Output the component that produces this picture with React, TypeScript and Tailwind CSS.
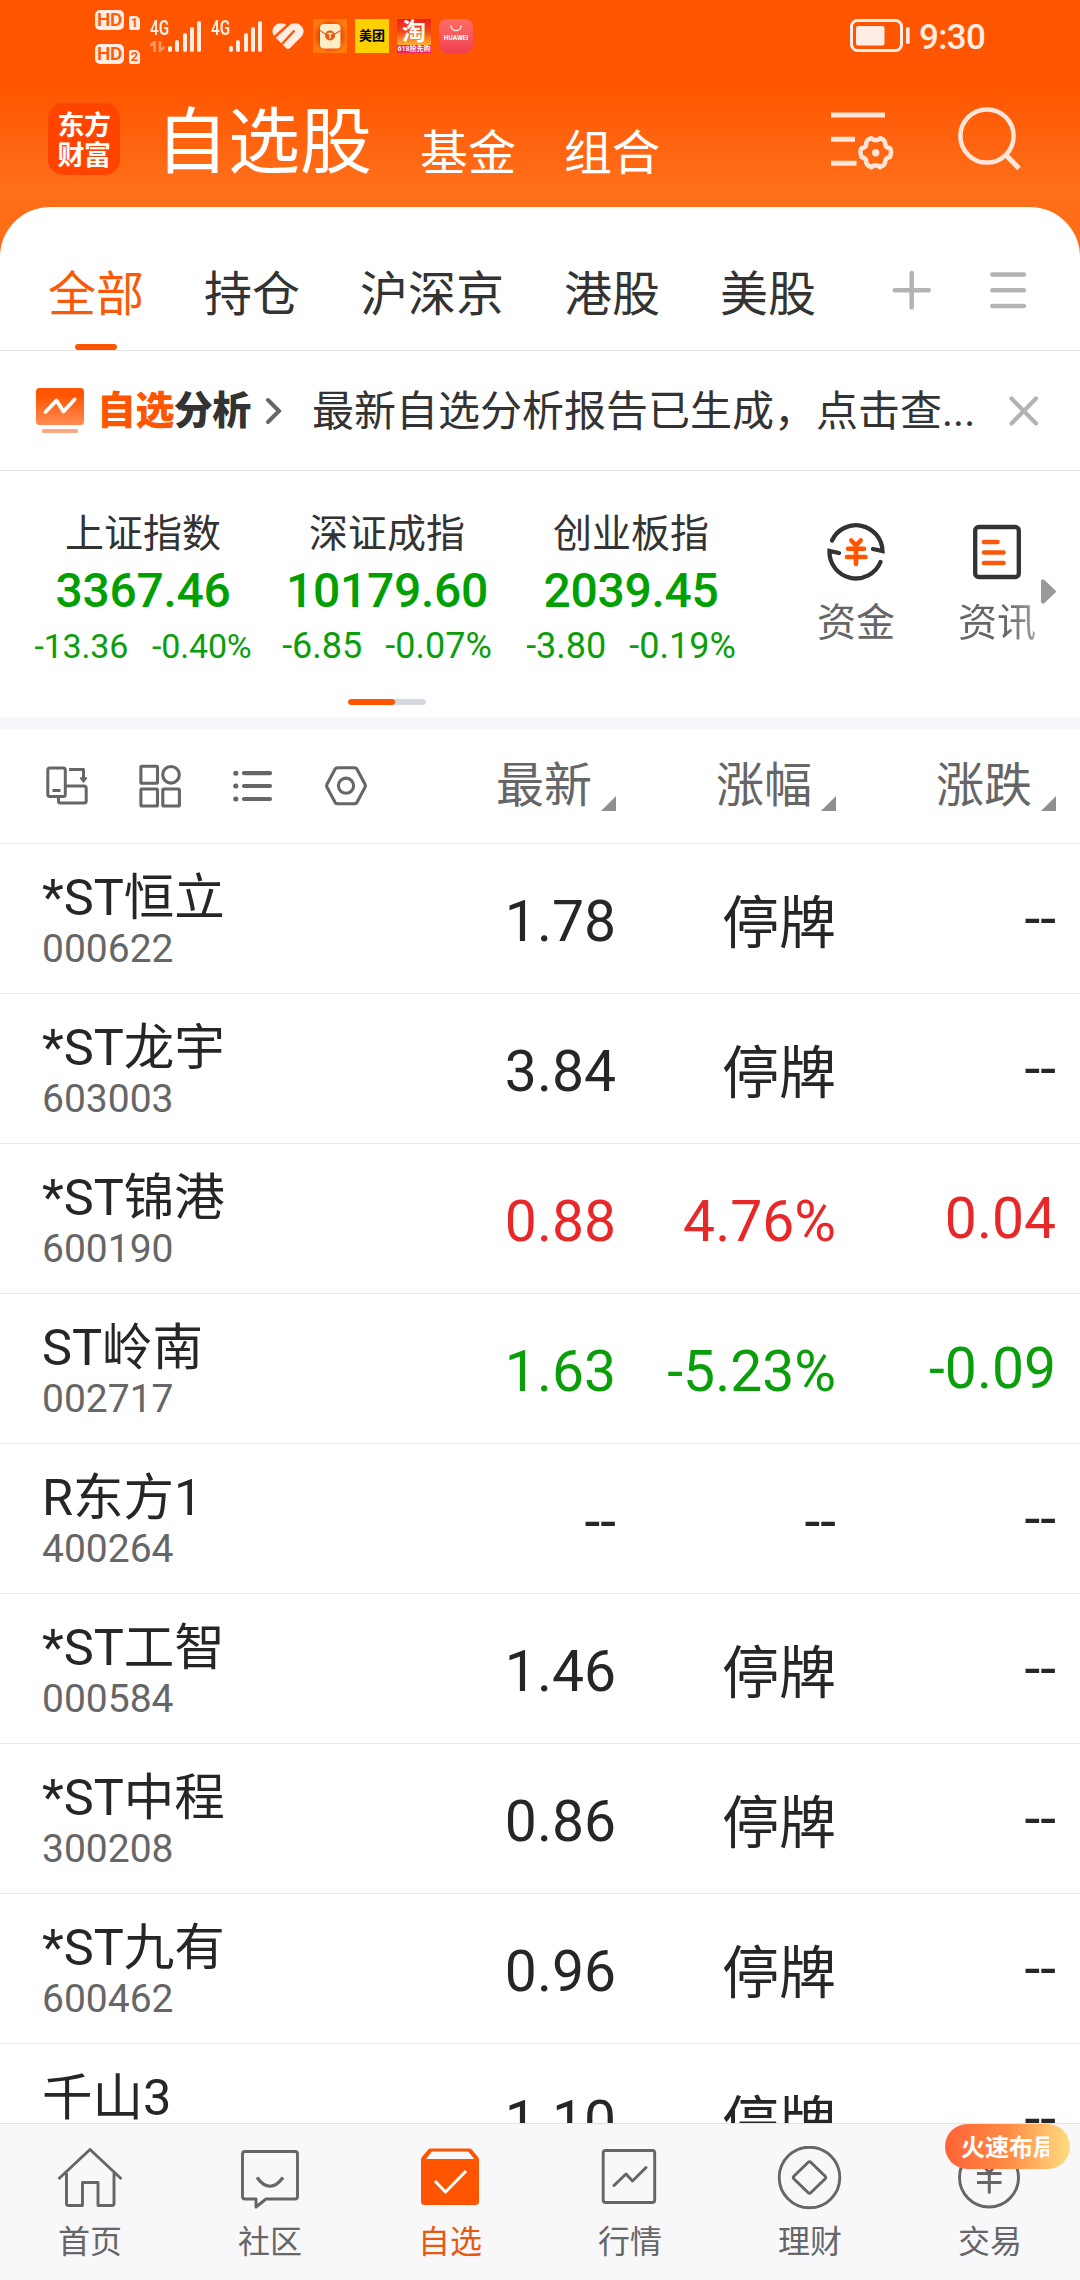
import React from "react";

type Tone = "flat" | "up" | "down";

interface Stock {
  name: string;
  code: string;
  price: string;
  pct: string;
  change: string;
  tone: Tone;
}

const stocks: Stock[] = [
  { name: "*ST恒立", code: "000622", price: "1.78", pct: "停牌", change: "--", tone: "flat" },
  { name: "*ST龙宇", code: "603003", price: "3.84", pct: "停牌", change: "--", tone: "flat" },
  { name: "*ST锦港", code: "600190", price: "0.88", pct: "4.76%", change: "0.04", tone: "up" },
  { name: "ST岭南", code: "002717", price: "1.63", pct: "-5.23%", change: "-0.09", tone: "down" },
  { name: "R东方1", code: "400264", price: "--", pct: "--", change: "--", tone: "flat" },
  { name: "*ST工智", code: "000584", price: "1.46", pct: "停牌", change: "--", tone: "flat" },
  { name: "*ST中程", code: "300208", price: "0.86", pct: "停牌", change: "--", tone: "flat" },
  { name: "*ST九有", code: "600462", price: "0.96", pct: "停牌", change: "--", tone: "flat" },
  { name: "千山3", code: "", price: "1.10", pct: "停牌", change: "--", tone: "flat" },
];

const toneClass: Record<Tone, string> = {
  flat: "text-[#262626]",
  up: "text-[#e82828]",
  down: "text-[#0a9e0a]",
};

const indices = [
  { name: "上证指数", value: "3367.46", diff: "-13.36", pct: "-0.40%", size: "gap-[24px] text-[34px] tracking-[-0.2px]" },
  { name: "深证成指", value: "10179.60", diff: "-6.85", pct: "-0.07%", size: "gap-[23px] text-[36px]" },
  { name: "创业板指", value: "2039.45", diff: "-3.80", pct: "-0.19%", size: "gap-[23px] text-[36px]" },
];

function HdBadge({ sim }: { sim: string }) {
  return (
    <div className="flex h-[20px] items-end gap-[5px]">
      <div className="flex h-[20px] w-[29px] items-center justify-center rounded-[5px] bg-[#ffede4] text-[19px] leading-[20px] font-semibold tracking-[-0.5px] text-[#ff5a08]">
        HD
      </div>
      <div className="flex h-[14px] w-[11px] items-center justify-center rounded-[2px] rounded-tr-[5px] bg-[#ffede4] text-[13px] leading-[14px] font-bold text-[#ff5a08]">
        {sim}
      </div>
    </div>
  );
}

function Signal({ data }: { data?: boolean }) {
  return (
    <div className="flex h-[31px] w-[51px] items-end">
      <div className="flex h-[31px] w-[18px] flex-col justify-between">
        <span className="origin-left scale-x-[0.76] text-[20px] leading-[15px] font-semibold text-[#ffede4]">4G</span>
        {data ? (
          <svg width="16" height="11" viewBox="0 0 16 11" fill="none" stroke="#ff9a68" strokeWidth="2.500">
            <path d="M0.500 4.500 4.500 1V11M10 0v9.500L14.500 6" />
          </svg>
        ) : null}
      </div>
      <div className="flex flex-1 items-end justify-between">
        <i className="h-[6px] w-[4px] rounded-full bg-[#ffede4]" />
        <i className="h-[12px] w-[4px] rounded-full bg-[#ffede4]" />
        <i className="h-[19px] w-[4px] rounded-full bg-[#ffede4]" />
        <i className="h-[25px] w-[4px] rounded-full bg-[#ffede4]" />
        <i className="h-[31px] w-[4px] rounded-full bg-[#ffede4]" />
      </div>
    </div>
  );
}

function StatusBar() {
  return (
    <div className="flex h-[72px] items-center pr-[96px] pl-[95px]">
      <div className="mt-[2px] flex w-[45px] flex-col gap-[14px]">
        <HdBadge sim="1" />
        <HdBadge sim="2" />
      </div>
      <div className="ml-[10px] flex gap-[10px]">
        <Signal data />
        <Signal />
      </div>
      <svg className="ml-[10px]" width="32" height="28" viewBox="0 0 32 28">
        <path
          fill="#ffede4"
          d="M16 4.500C12 -0.500 4.500 0.500 1.500 5.500C-0.500 9 0.500 12.500 3 15L14 26Q16 28 18 26L29 15C31.500 12.500 32.500 9 30.500 5.500C27.500 0.500 20 -0.500 16 4.500Z"
        />
        <path fill="none" stroke="#ff5500" strokeWidth="2.400" d="M2 15.500 16.500 2.500M9.500 22.500 22.500 8.500" />
      </svg>
      <svg className="ml-[9px]" width="34" height="34" viewBox="0 0 34 34">
        <defs>
          <radialGradient id="envelopeGlow">
            <stop offset="0.600" stopColor="#e83f00" />
            <stop offset="1" stopColor="#ff7a0c" />
          </radialGradient>
        </defs>
        <rect width="34" height="34" fill="url(#envelopeGlow)" />
        <rect x="7" y="5" width="20.500" height="24.500" rx="4" fill="#ffedc8" />
        <path d="M7 11.500 17 18l10.500-6.500" fill="none" stroke="#e36a28" strokeWidth="1.200" />
        <circle cx="17" cy="16.500" r="5" fill="#e8590f" />
        <path d="M14.500 14.500h5M17 14.500v5" stroke="#ffedc8" strokeWidth="1.500" />
      </svg>
      <div className="ml-[8px] flex h-[34px] w-[34px] items-center justify-center bg-[#ffd100] text-[13px] font-bold text-black">
        美团
      </div>
      <div className="ml-[8px] flex h-[34px] w-[34px] flex-col overflow-hidden text-white">
        <div className="flex h-[26px] items-center justify-center bg-linear-to-b from-[#ee1b1b] via-[#f2481c] to-[#ffb02e] text-[24px] leading-[26px] font-bold">
          淘
        </div>
        <div className="flex h-[8px] items-center justify-center bg-[#f2205c] text-[7px] leading-[8px] font-bold whitespace-nowrap">
          618抢先购
        </div>
      </div>
      <div className="ml-[8px] flex h-[34px] w-[34px] flex-col items-center rounded-[8px] bg-linear-to-b from-[#ff6d66] to-[#f03e50] pt-[6px] text-white">
        <svg width="12" height="7" viewBox="0 0 12 7" fill="none" stroke="#fff" strokeWidth="1.200">
          <path d="M0.700 0.500C2 7.300 10 7.300 11.300 0.500" />
        </svg>
        <span className="mt-[2px] text-[6.5px] leading-[9px] font-bold">HUAWEI</span>
      </div>
      <svg className="ml-auto" width="60" height="34" viewBox="0 0 60 34">
        <rect x="1.500" y="1.500" width="50" height="30" rx="6" fill="none" stroke="#ffede4" strokeWidth="3" />
        <rect x="6" y="7" width="28.500" height="19.500" rx="2" fill="#ffede4" />
        <rect x="56" y="8" width="3.700" height="17" rx="1.800" fill="#ffede4" />
      </svg>
      <span className="mt-[3px] ml-[9px] w-[65px] text-[35px] leading-[36px] font-medium tracking-[-0.7px] text-[#ffede4]">9:30</span>
    </div>
  );
}

function TitleBar() {
  return (
    <div className="flex h-[135px] items-start pl-[48px] text-white">
      <div className="mt-[31px] flex h-[72px] w-[72px] flex-col items-center rounded-[15px] bg-[#ff4400] pt-[6px] font-['Noto_Sans_CJK_SC'] text-[27px] leading-[30px] font-bold tracking-[-0.5px]">
        <span>东方</span>
        <span>财富</span>
      </div>
      <h1 className="mt-[35px] ml-[36px] w-[216px] text-[72px] leading-[72px]">自选股</h1>
      <span className="mt-[58px] ml-[48px] text-[48px] leading-[48px]">基金</span>
      <span className="mt-[58px] ml-[48px] text-[48px] leading-[48px]">组合</span>
      <svg className="mt-[38px] ml-[171px]" width="64" height="60" viewBox="0 0 64 60" fill="none" stroke="#ffe6d8" strokeWidth="5">
        <path d="M0 5h54M0 29.200h24M0 53.200h25.500" />
        <path
          strokeWidth="4.500"
          strokeLinejoin="round"
          d="M40.300 28.200Q44.700 32 49.100 28.200Q54.500 29.800 54.200 34.500Q54.500 37.300 59 38.300Q61 41 59 47Q54.500 48 54.200 51Q54.500 55 49.100 57.200Q44.700 53.500 40.300 57.200Q35 55 35.200 51Q35 48 30.500 47Q28.500 41 30.500 38.300Q35 37.300 35.200 34.500Q35 29.800 40.300 28.200Z"
        />
        <circle cx="44.700" cy="42.700" r="3.700" fill="#ffe6d8" stroke="none" />
      </svg>
      <svg className="mt-[34px] ml-[63px]" width="64" height="64" viewBox="0 0 64 64" fill="none" stroke="#ffe6d8" strokeWidth="4.500">
        <circle cx="29" cy="30" r="26.600" />
        <path strokeWidth="5" d="M47 48 61 62.500" />
      </svg>
    </div>
  );
}

function GroupTabs() {
  const tabs = ["全部", "持仓", "沪深京", "港股", "美股"];
  return (
    <div className="flex h-[144px] items-start rounded-t-[50px] border-b border-[#e3e3e3] bg-white pl-[48px]">
      <div className="flex gap-[60px]">
        {tabs.map((t, i) => (
          <div
            key={t}
            className={
              i === 0
                ? "flex h-[143px] flex-col items-center justify-between pt-[64px] text-[48px] leading-[48px] text-[#f95a0a]"
                : "flex h-[143px] flex-col items-center pt-[64px] text-[48px] leading-[48px] text-[#333]"
            }
          >
            <span>{t}</span>
            {i === 0 ? <i className="h-[6px] w-[42px] rounded-full bg-[#ff5500]" /> : null}
          </div>
        ))}
      </div>
      <svg className="mt-[63px] ml-[76px]" width="40" height="40" viewBox="0 0 40 40" stroke="#b3b3b3" strokeWidth="4.500" strokeLinecap="round">
        <path d="M2.700 20.300h34M19.700 3v34.600" />
      </svg>
      <svg className="mt-[63px] ml-[58px]" width="36" height="40" viewBox="0 0 36 40" stroke="#b3b3b3" strokeWidth="4.500" strokeLinecap="round">
        <path d="M2.300 4.600h31.500M2.300 20.300h31.500M2.300 36h31.500" />
      </svg>
    </div>
  );
}

function AnalysisNotice() {
  return (
    <div className="flex h-[120px] items-center border-b border-[#e3e3e3] pl-[36px]">
      <svg width="48" height="46" viewBox="0 0 48 46">
        <defs>
          <linearGradient id="analysisFill" x1="0" y1="0" x2="0" y2="1">
            <stop offset="0.200" stopColor="#ff5500" />
            <stop offset="1" stopColor="#ff8d55" />
          </linearGradient>
        </defs>
        <rect width="48" height="37" rx="3.500" fill="url(#analysisFill)" />
        <path d="M9.500 24 20.500 12.500l7 11 11-12" fill="none" stroke="#fff" strokeWidth="3.800" strokeLinecap="round" strokeLinejoin="round" />
        <rect x="6" y="41" width="36" height="4" rx="1.500" fill="#fba882" />
      </svg>
      <span className="ml-[13px] w-[153px] text-[39px] leading-[40px] font-black tracking-[-0.6px] whitespace-nowrap text-[#333]">
        <span className="text-[#ff5500]">自选</span>分析
      </span>
      <svg className="ml-[15px]" width="18" height="28" viewBox="0 0 18 28" fill="none" stroke="#666" strokeWidth="4" strokeLinecap="round">
        <path d="M3 3 14 14 3 25" />
      </svg>
      <p className="mt-[2px] ml-[29px] w-[666px] text-[42px] leading-[42px] whitespace-nowrap text-[#333]">最新自选分析报告已生成，点击查...</p>
      <svg className="ml-[30px]" width="32" height="32" viewBox="0 0 32 32" fill="none" stroke="#b3b3b3" strokeWidth="4.200" strokeLinecap="round">
        <path d="M3.500 3.500 28 28.500M28 3.500 3.500 28.500" />
      </svg>
    </div>
  );
}

function IndexStrip() {
  return (
    <div className="relative flex h-[246px] pl-[21px]">
      {indices.map((x) => (
        <div key={x.name} className="flex w-[244px] flex-col items-center">
          <span className="mt-[44px] text-[39px] leading-[39px] text-[#333]">{x.name}</span>
          <span className="mt-[13px] text-[48px] leading-[48px] font-medium tracking-[-0.3px] text-[#00a000]">{x.value}</span>
          <div className={"mt-[13px] flex h-[36px] items-end leading-[36px] whitespace-nowrap text-[#0a9e0a] " + x.size}>
            <span>{x.diff}</span>
            <span>{x.pct}</span>
          </div>
        </div>
      ))}
      <div className="ml-[46px] flex w-[114px] flex-col items-center">
        <svg className="mt-[50px]" width="60" height="60" viewBox="0 0 60 60" fill="none" stroke="#333" strokeWidth="4.300" strokeLinecap="round" strokeLinejoin="miter">
          <path d="M6 19.500A26.500 26.500 0 0 1 56.500 30L47 28" />
          <path d="M54.500 41A26.500 26.500 0 0 1 3.500 30L13 32" />
          <path stroke="#ff5500" strokeWidth="4.600" d="M25.300 19.500 30 24.500 34.700 19.500M22 27.700h16M21 36h18.500M30 25v18" />
        </svg>
        <span className="mt-[23px] text-[39px] leading-[38px] text-[#666]">资金</span>
      </div>
      <div className="ml-[28px] flex w-[112px] flex-col items-center">
        <svg className="mt-[51px]" width="48" height="60" viewBox="0 0 48 60" fill="none" stroke="#333" strokeWidth="4.300" strokeLinecap="round">
          <rect x="2.200" y="5" width="43.600" height="50" rx="3.500" />
          <path stroke="#f95a0a" strokeWidth="4.600" d="M11 20h13.500M11 30.500h19.500M11 41h19.500" />
        </svg>
        <span className="mt-[22px] bg-linear-to-r from-[#666] from-60% to-[#a0a0a0] bg-clip-text text-[39px] leading-[38px] text-transparent">资讯</span>
      </div>
      <svg className="absolute top-[108px] left-[1041px]" width="16" height="25" viewBox="0 0 16 25" fill="#999">
        <path d="M0 3C0 0 2 -0.500 4 1.500L14.500 11.500Q15.500 12.500 14.500 13.500L4 23.500C2 25.500 0 25 0 22Z" />
      </svg>
      <div className="absolute top-[228px] left-[348px] h-[6px] w-[78px] overflow-hidden rounded-full bg-[#d5d8de]">
        <i className="block h-[6px] w-[47px] rounded-full bg-[#ff5500]" />
      </div>
    </div>
  );
}

function TableHead() {
  return (
    <div className="flex h-[115px] items-center border-b border-[#ebebeb] pl-[45px]">
      <svg width="44" height="44" viewBox="0 0 44 44" fill="none" stroke="#666" strokeWidth="3" strokeLinejoin="round">
        <rect x="2.800" y="4" width="17.500" height="28.500" rx="2" />
        <path d="M7.500 26.500h8M13.500 33.500V37.500Q13.500 39 15 39H39Q41.200 39 41.200 37V24.500Q41.200 22 39 22H21M24 5.500H38.500V15" />
        <path d="M35.500 14h6l-3 4z" fill="#666" strokeWidth="1.500" />
      </svg>
      <svg className="ml-[50px]" width="44" height="44" viewBox="0 0 44 44" fill="none" stroke="#666" strokeWidth="3.100">
        <rect x="1.900" y="2.300" width="16.600" height="17" rx="1" />
        <circle cx="32" cy="10.800" r="8.300" />
        <rect x="1.900" y="25" width="16.600" height="17" rx="1" />
        <rect x="23.800" y="25" width="16.600" height="17" rx="1" />
      </svg>
      <svg className="ml-[50px]" width="42" height="44" viewBox="0 0 42 44" stroke="#666" strokeWidth="4.200" strokeLinecap="round">
        <path d="M11 9.200h26M11 22h26M11 35h26" />
        <path strokeWidth="5" d="M2.700 9.200h0.200M2.700 22h0.200M2.700 35h0.200" />
      </svg>
      <svg className="ml-[49px]" width="44" height="44" viewBox="0 0 44 44" fill="none" stroke="#666" strokeWidth="3.100" strokeLinejoin="round">
        <path d="M13.500 3.700H30.500Q32 3.700 33 5.200L41 20.300Q41.800 21.800 41 23.300L33 38.300Q32 39.800 30.500 39.800H13.500Q12 39.800 11 38.300L3 23.300Q2.200 21.800 3 20.300L11 5.200Q12 3.700 13.500 3.700Z" />
        <circle cx="22" cy="21.700" r="7.600" />
      </svg>
      <div className="ml-auto flex pr-[24px]">
        {["最新", "涨幅", "涨跌"].map((h) => (
          <div key={h} className="flex w-[220px] items-end justify-end gap-[9px] text-[48px] leading-[50px] text-[#666]">
            <span>{h}</span>
            <svg className="mb-[0px]" width="15" height="15" viewBox="0 0 15 15" fill="#8e8e93">
              <path d="M15 0V15H0Z" />
            </svg>
          </div>
        ))}
      </div>
    </div>
  );
}

function StockRow({ s }: { s: Stock }) {
  return (
    <div className="flex h-[150px] shrink-0 items-start border-b border-[#ebebeb] pl-[42px]">
      <div className="flex w-[354px] flex-col">
        <span className="mt-[28px] text-[50.5px] leading-[51px] text-[#262626]">{s.name}</span>
        <span className="mt-[7px] text-[39px] leading-[39px] text-[#666]">{s.code}</span>
      </div>
      <div className={"flex text-right text-[57px] leading-[57px] " + toneClass[s.tone]}>
        <span className="mt-[49px] w-[220px]">{s.price}</span>
        <span className={s.pct === "停牌" ? "mt-[51px] w-[220px]" : "mt-[49px] w-[220px]"}>{s.pct}</span>
        <span className="mt-[46px] w-[220px]">{s.change}</span>
      </div>
    </div>
  );
}

const navItems: { label: string; active?: boolean; icon: React.ReactNode }[] = [
  {
    label: "首页",
    icon: <path d="M1.500 33 33 3.500 64.500 33M9.500 27V57.500Q9.500 59.500 11.500 59.500H25.500V36.500H41V59.500H55Q57 59.500 57 57.500V27" />,
  },
  {
    label: "社区",
    icon: (
      <>
        <path d="M8 5.500H58Q60.500 5.500 60.500 8V50.500Q60.500 53 58 53H29L19 61V53H8Q5.500 53 5.500 50.500V8Q5.500 5.500 8 5.500Z" />
        <path strokeWidth="3.200" d="M20 31.500Q33 49 46 31.500" />
      </>
    ),
  },
  {
    label: "自选",
    active: true,
    icon: (
      <>
        <path d="M13 2.500H53Q54 2.500 54.500 3.200L61 11Q62 12 62 14V55.500Q62 59 58.500 59H7.500Q4 59 4 55.500V14Q4 12 5 11L11.500 3.200Q12 2.500 13 2.500Z" fill="#ff5500" stroke="none" />
        <path d="M15 5.500H51L57.500 13H9Z" fill="#f8f8fb" stroke="none" />
        <path d="M18 35 28.500 46 49 25" stroke="#fff" strokeWidth="3" />
      </>
    ),
  },
  {
    label: "行情",
    icon: (
      <>
        <rect x="6.200" y="4.500" width="51.500" height="52" rx="2.500" />
        <path strokeWidth="3" strokeLinecap="round" d="M17 39.500 29 28 35.500 35 49 21.500" />
      </>
    ),
  },
  {
    label: "理财",
    icon: (
      <>
        <circle cx="32.500" cy="31.500" r="30.300" />
        <path strokeWidth="3" d="M31 16.500Q32.500 15 34 16.500L48 30Q49.500 31.500 48 33L34 46.500Q32.500 48 31 46.500L17 33Q15.500 31.500 17 30Z" />
      </>
    ),
  },
  {
    label: "交易",
    icon: (
      <>
        <circle cx="32" cy="31.500" r="29.500" />
        <path strokeWidth="3" d="M20 27.500H44.500M20 36.500H44.500M32.300 27V47.500M24 16l8.300 11L40.500 16" />
      </>
    ),
  },
];

function BottomNav() {
  return (
    <nav className="relative flex h-[157px] shrink-0 border-t border-[#e3e3e3] bg-[#f8f8fb]">
      {navItems.map((n) => (
        <div key={n.label} className="flex w-[180px] flex-col items-center pt-[22px]">
          <svg width="66" height="64" viewBox="0 0 66 64" fill="none" stroke="#666" strokeWidth="2.900" strokeLinejoin="round">
            {n.icon}
          </svg>
          <span className={n.active ? "mt-[16px] text-[32px] leading-[32px] text-[#e8590f]" : "mt-[16px] text-[32px] leading-[32px] text-[#666]"}>
            {n.label}
          </span>
        </div>
      ))}
      <div className="absolute top-0 left-[945px] flex h-[45px] w-[125px] items-center rounded-full bg-linear-to-r from-[#ff6238] via-[#ff8a44] via-50% to-[#ffdc80] pl-[16px]">
        <span className="mt-[2px] w-[88px] overflow-hidden text-[24px] leading-[28px] font-bold whitespace-nowrap text-white">火速布局</span>
      </div>
    </nav>
  );
}

export default function App() {
  return (
    <div className="flex h-[2280px] w-[1080px] flex-col overflow-hidden bg-white font-[Roboto,'Noto_Sans_CJK_SC',sans-serif]">
      <header className="bg-linear-to-b from-[#ff5500] from-[41%] to-[#ff6f19] to-[92%]">
        <StatusBar />
        <TitleBar />
      </header>
      <div className="bg-[#ff6d17]">
        <GroupTabs />
      </div>
      <AnalysisNotice />
      <IndexStrip />
      <div className="h-[12px] bg-[#f6f7fa]" />
      <TableHead />
      <main className="flex min-h-0 flex-1 flex-col overflow-hidden">
        {stocks.map((s) => (
          <StockRow key={s.name} s={s} />
        ))}
      </main>
      <BottomNav />
    </div>
  );
}
